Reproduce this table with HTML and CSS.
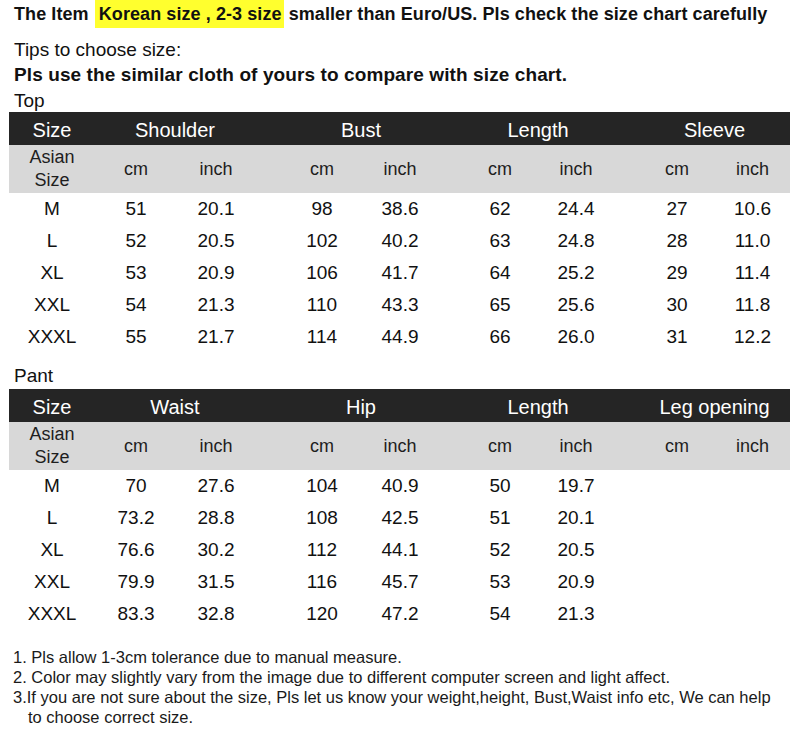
FILE: index.html
```html
<!DOCTYPE html>
<html lang="en">
<head>
<meta charset="utf-8">
<title>Size chart</title>
<link rel="stylesheet" href="styles.css">
</head>
<body>
<div class="page">
  <p class="title">The Item <mark class="hl">Korean size , 2-3 size</mark> smaller than Euro/US. Pls check the size chart carefully</p>
  <p class="tips">Tips to choose size:</p>
  <p class="strong">Pls use the similar cloth of yours to compare with size chart.</p>
  <p class="label label-top">Top</p>
  <div class="chart">
    <div class="row head">
      <div class="c">Size</div>
      <div class="c span">Shoulder</div>
      <div class="c span g2">Bust</div>
      <div class="c span g3">Length</div>
      <div class="c span g4">Sleeve</div>
    </div>
    <div class="row sub">
      <div class="c two">Asian<br>Size</div>
      <div class="c">cm</div><div class="c">inch</div>
      <div class="c g2">cm</div><div class="c">inch</div>
      <div class="c g3">cm</div><div class="c">inch</div>
      <div class="c g4">cm</div><div class="c">inch</div>
    </div>
    <div class="row data"><div class="c">M</div><div class="c">51</div><div class="c">20.1</div><div class="c g2">98</div><div class="c">38.6</div><div class="c g3">62</div><div class="c">24.4</div><div class="c g4">27</div><div class="c">10.6</div></div>
    <div class="row data"><div class="c">L</div><div class="c">52</div><div class="c">20.5</div><div class="c g2">102</div><div class="c">40.2</div><div class="c g3">63</div><div class="c">24.8</div><div class="c g4">28</div><div class="c">11.0</div></div>
    <div class="row data"><div class="c">XL</div><div class="c">53</div><div class="c">20.9</div><div class="c g2">106</div><div class="c">41.7</div><div class="c g3">64</div><div class="c">25.2</div><div class="c g4">29</div><div class="c">11.4</div></div>
    <div class="row data"><div class="c">XXL</div><div class="c">54</div><div class="c">21.3</div><div class="c g2">110</div><div class="c">43.3</div><div class="c g3">65</div><div class="c">25.6</div><div class="c g4">30</div><div class="c">11.8</div></div>
    <div class="row data"><div class="c">XXXL</div><div class="c">55</div><div class="c">21.7</div><div class="c g2">114</div><div class="c">44.9</div><div class="c g3">66</div><div class="c">26.0</div><div class="c g4">31</div><div class="c">12.2</div></div>
  </div>

  <p class="label label-pant">Pant</p>
  <div class="chart">
    <div class="row head">
      <div class="c">Size</div>
      <div class="c span">Waist</div>
      <div class="c span g2">Hip</div>
      <div class="c span g3">Length</div>
      <div class="c span g4">Leg opening</div>
    </div>
    <div class="row sub">
      <div class="c two">Asian<br>Size</div>
      <div class="c">cm</div><div class="c">inch</div>
      <div class="c g2">cm</div><div class="c">inch</div>
      <div class="c g3">cm</div><div class="c">inch</div>
      <div class="c g4">cm</div><div class="c">inch</div>
    </div>
    <div class="row data"><div class="c">M</div><div class="c">70</div><div class="c">27.6</div><div class="c g2">104</div><div class="c">40.9</div><div class="c g3">50</div><div class="c">19.7</div><div class="c g4"></div><div class="c"></div></div>
    <div class="row data"><div class="c">L</div><div class="c">73.2</div><div class="c">28.8</div><div class="c g2">108</div><div class="c">42.5</div><div class="c g3">51</div><div class="c">20.1</div><div class="c g4"></div><div class="c"></div></div>
    <div class="row data"><div class="c">XL</div><div class="c">76.6</div><div class="c">30.2</div><div class="c g2">112</div><div class="c">44.1</div><div class="c g3">52</div><div class="c">20.5</div><div class="c g4"></div><div class="c"></div></div>
    <div class="row data"><div class="c">XXL</div><div class="c">79.9</div><div class="c">31.5</div><div class="c g2">116</div><div class="c">45.7</div><div class="c g3">53</div><div class="c">20.9</div><div class="c g4"></div><div class="c"></div></div>
    <div class="row data"><div class="c">XXXL</div><div class="c">83.3</div><div class="c">32.8</div><div class="c g2">120</div><div class="c">47.2</div><div class="c g3">54</div><div class="c">21.3</div><div class="c g4"></div><div class="c"></div></div>
  </div>

  <ol class="notes">
    <li>1. Pls allow 1-3cm tolerance due to manual measure.</li>
    <li>2. Color may slightly vary from the image due to different computer screen and light affect.</li>
    <li class="hang">3.If you are not sure about the size, Pls let us know your weight,height, Bust,Waist info etc, We can help to choose correct size.</li>
  </ol>
</div>
</body>
</html>
```
FILE: styles.css
```css
* { box-sizing: border-box; }
html, body { margin: 0; padding: 0; background: #fff; }
body {
  font-family: "Liberation Sans", Arial, sans-serif;
  color: #111;
}
.page {
  width: 800px;
  padding: 0 10px 0 9px;
}
p { margin: 0; }

.title {
  font-weight: bold;
  font-size: 18px;
  line-height: 28px;
  height: 28px;
  padding-left: 5px;
  white-space: nowrap;
  letter-spacing: 0.08px;
}
.hl {
  display: inline-block;
  vertical-align: top;
  background: #ffff2e;
  color: #111;
  margin-left: 1px;
  padding: 0 2px 0 4px;
  line-height: 28px;
  height: 28px;
}
.tips {
  margin-top: 10px;
  font-size: 19px;
  line-height: 24px;
  padding-left: 5px;
}
.strong {
  font-weight: bold;
  font-size: 19px;
  line-height: 25px;
  padding-left: 5px;
  letter-spacing: 0.1px;
}
.label {
  font-size: 19px;
  line-height: 22px;
  padding-left: 5px;
}
.label-top { padding-top: 3px; }
.label-pant { margin-top: 12px; padding-bottom: 2px; }

.chart { width: 781px; }
.row {
  display: grid;
  grid-template-columns: 86px 82px 78px 106px 78px 99px 76px 101px 75px;
  align-items: center;
}
.c { text-align: center; white-space: nowrap; }
.span { grid-column: span 2; }
.g2 { padding-left: 28px; }
.g3 { padding-left: 23px; }
.g4 { padding-left: 25px; }

.head {
  background: #252525;
  color: #fff;
  height: 33px;
  font-size: 20px;
  line-height: 33px;
}
.head .c { padding-top: 2px; }
.sub {
  background: #d8d8d8;
  color: #1e1e1e;
  height: 48px;
  font-size: 18px;
}
.sub .two { line-height: 23px; }
.data {
  height: 32px;
  font-size: 19px;
  color: #111;
}

.notes {
  list-style: none;
  margin: 17px 0 0;
  padding: 0 0 0 4px;
  font-size: 16.5px;
  line-height: 20px;
  color: #1a1a1a;
  width: 774px;
}
.notes .hang {
  padding-left: 15px;
  text-indent: -15px;
}
```
